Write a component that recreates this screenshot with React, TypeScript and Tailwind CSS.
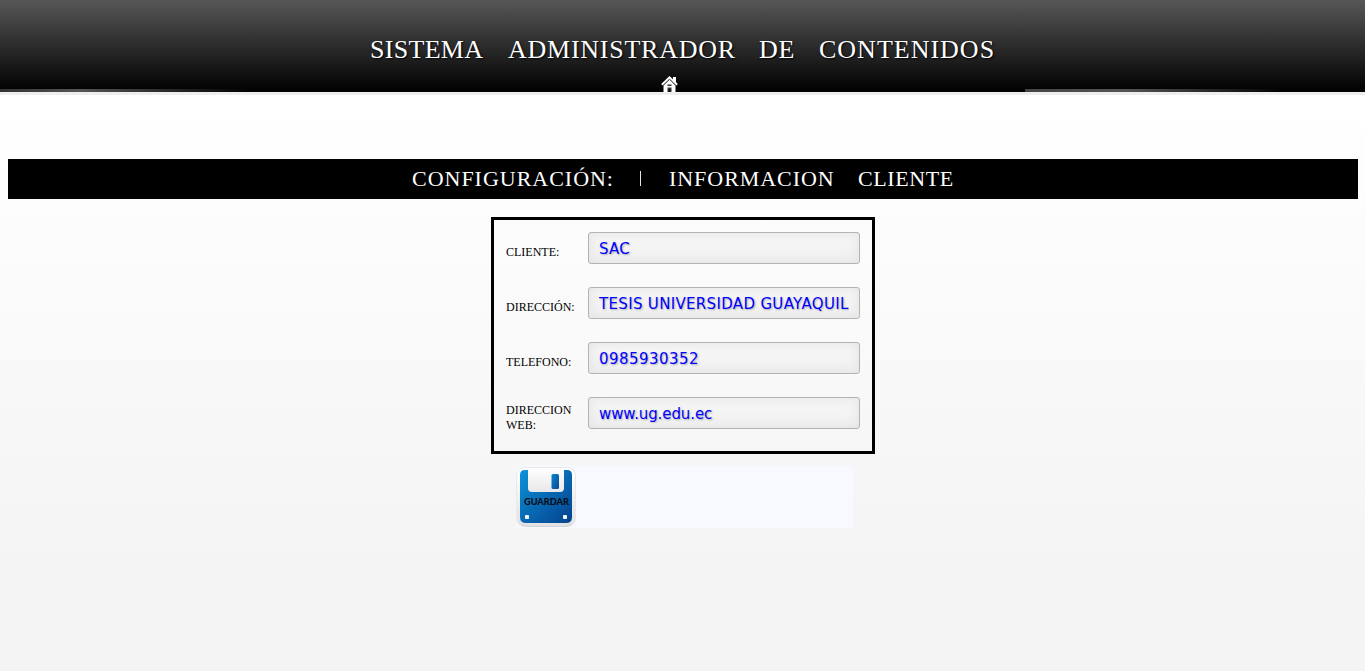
import React from "react";

const fields = [
  { label: "CLIENTE:", value: "SAC", spacing: "tracking-[0.2px]" },
  { label: "DIRECCIÓN:", value: "TESIS UNIVERSIDAD GUAYAQUIL", spacing: "tracking-[0.33px]" },
  { label: "TELEFONO:", value: "0985930352", spacing: "tracking-[0.45px]" },
  { label: "DIRECCION WEB:", value: "www.ug.edu.ec", spacing: "tracking-[-0.1px]" },
];

function HomeIcon() {
  return (
    <svg width="18" height="17" viewBox="0 0 18 17" className="block" fill="none">
      <path d="M2.500 9 8.500 3l6 6v8h-12Z" fill="#fff" />
      <path d="M12 1h3v6l-3-3Z" fill="#fff" />
      <path d="m2 10 6.500-6.500L15 10" stroke="#666" strokeWidth="1" />
      <path d="m0.800 8.700 7.700-7.300 7.700 7.300" stroke="#fff" strokeWidth="1.900" />
      <path d="M6.500 8.500h4V10h-4zM6.500 11.500h4V17h-4z" fill="#333" />
      <path d="M7.500 13h2v4h-2z" fill="#111" />
    </svg>
  );
}

function SaveIcon() {
  return (
    <svg width="60" height="60" viewBox="0 0 60 60" className="block">
      <defs>
        <linearGradient id="disk" x1="0" y1="0" x2="1" y2="1">
          <stop offset="0" stopColor="#0a93d8" />
          <stop offset="0.5" stopColor="#0869b3" />
          <stop offset="1" stopColor="#04418c" />
        </linearGradient>
        <linearGradient id="shutter" x1="0" y1="0" x2="0" y2="1">
          <stop offset="0" stopColor="#fff" />
          <stop offset="1" stopColor="#e8e8ea" />
        </linearGradient>
        <linearGradient id="rim" x1="0" y1="0" x2="0" y2="1">
          <stop offset="0" stopColor="#fff" />
          <stop offset="1" stopColor="#e2e2e4" />
        </linearGradient>
        <linearGradient id="slot" x1="0" y1="0" x2="1" y2="1">
          <stop offset="0" stopColor="#0a86cc" />
          <stop offset="1" stopColor="#054b95" />
        </linearGradient>
      </defs>
      <rect x="0.500" y="0.500" width="59" height="59" rx="8" fill="url(#rim)" stroke="#e8e9ec" />
      <path d="M5 57q3 2.500 7 2.500h36q4 0 7-2.500" fill="none" stroke="#c9cacd" strokeWidth="0.800" />
      <path d="M9 3h42q5 0 5 5v42q0 6-6 6H10q-6 0-6-6V8q0-5 5-5Z" fill="url(#disk)" />
      <path d="M12 1h36v20q0 4-4 4H16q-4 0-4-4Z" fill="url(#shutter)" />
      <rect x="35.500" y="7" width="7.500" height="15" rx="1.500" fill="url(#slot)" />
      <rect x="9" y="48" width="4" height="4" rx="0.800" fill="#eef4fa" />
      <rect x="47" y="48" width="4" height="4" rx="0.800" fill="#eef4fa" />
      <text x="8" y="37.500" textLength="45" lengthAdjust="spacingAndGlyphs" fontFamily="Lato, sans-serif" fontWeight="900" fontSize="9.700" fill="#080c12">GUARDAR</text>
    </svg>
  );
}

export default function App() {
  return (
    <div className="h-[671px] w-full overflow-hidden bg-linear-to-b from-white from-15% to-[#f4f4f4] to-85%">
      <header className="flex h-[95px] flex-col border-b-3 border-[#eeeeee] bg-linear-to-b/srgb from-[#575757] to-black bg-origin-padding font-['Liberation_Serif',serif]">
        <h1 className="flex h-[76px] shrink-0 pt-[35px] pl-[370px] text-[26px] leading-[30px] whitespace-nowrap text-white [text-shadow:1px_1px_2px_#000]">
          <span className="w-[138px] tracking-[0.3px]">SISTEMA</span>
          <span className="w-[251px] tracking-[0.75px]">ADMINISTRADOR</span>
          <span className="w-[60px] tracking-[0.7px]">DE</span>
          <span className="tracking-[1px]">CONTENIDOS</span>
        </h1>
        <div className="flex h-4 items-end">
          <div className="h-[3px] w-[661px] bg-linear-to-r from-[#333] via-[#555] via-[80px] to-transparent to-[250px]" />
          <div className="h-4 w-[18px] overflow-hidden"><HomeIcon /></div>
          <div className="ml-[346px] h-[3px] flex-1 bg-linear-to-r from-[#444] via-[#555] via-[100px] to-transparent to-[260px]" />
        </div>
      </header>

      <main className="pt-16">
        <h2 className="mr-[7px] ml-2 flex h-10 bg-black pl-[404px] font-['Liberation_Serif',serif] text-[22px] leading-[40px] whitespace-nowrap text-white">
          <span className="w-[228px] tracking-[0.98px]">CONFIGURACIÓN:</span>
          <span className="mt-[12px] mr-[28px] h-[15px] w-px bg-[#e5e5e5]" />
          <span className="w-[189px] tracking-[0.95px]">INFORMACION</span>
          <span className="tracking-[0.6px]">CLIENTE</span>
        </h2>

        <form className="mt-[18px] ml-[491px] w-[384px]" onSubmit={(e) => e.preventDefault()}>
          <div className="flex h-[237px] flex-col gap-[23px] border-3 border-black pt-3 pl-3">
            {fields.map((field) => (
              <label key={field.label} className="flex h-8">
                <span className="flex w-[82px] items-center pt-[9px] pr-2 font-['Liberation_Serif',serif] text-[12px] leading-[15px] text-black">
                  {field.label}
                </span>
                <input
                  defaultValue={field.value}
                  className={`h-8 w-[272px] rounded-[3px] border border-[#b3b3b3] bg-linear-to-b from-[#f7f7f7] to-[#f0f0f0] px-[10px] pt-px font-['DejaVu_Sans',sans-serif] text-[15px] text-[#0000ff] shadow-[inset_0_0_12px_#e2e2e2] outline-none [text-shadow:1px_1px_2px_#aaa] ${field.spacing}`}
                />
              </label>
            ))}
          </div>
          <button className="mt-[12px] ml-[25px] flex h-[62px] w-[337px] items-start bg-[#f8f9fe] pt-px" type="submit">
            <SaveIcon />
          </button>
        </form>
      </main>
    </div>
  );
}
